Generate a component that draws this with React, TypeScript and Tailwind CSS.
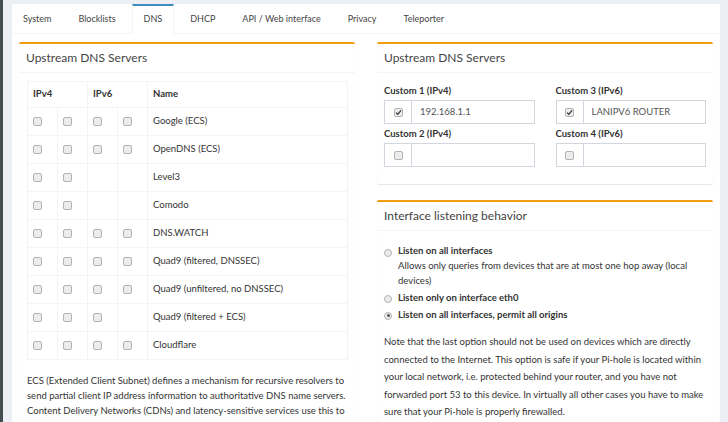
import React from 'react';

const font = { fontFamily: 'Lato, "Noto Sans", sans-serif' };

function Check({ on }: { on?: boolean }) {
  return (
    <span className="inline-flex w-[9px] h-[9px] items-center justify-center rounded-[2px] border border-[#b3b3b3] bg-[#ececec]">
      {on && (
        <svg viewBox="0 0 10 10" className="w-[7px] h-[7px]">
          <path d="M1.5 5.2 L4 7.6 L8.6 2" fill="none" stroke="#333" strokeWidth="1.8" />
        </svg>
      )}
    </span>
  );
}

function Radio({ on }: { on?: boolean }) {
  return (
    <span className="inline-flex w-[8px] h-[8px] shrink-0 items-center justify-center rounded-full border border-[#b3b3b3] bg-[#ececec]">
      {on && <span className="w-[3px] h-[3px] rounded-full bg-[#555]" />}
    </span>
  );
}

function Box({ title, children }: { title: string; children: React.ReactNode }) {
  return (
    <div className="bg-white border-t-2 border-[#f39c12] rounded-[2px] shadow-[0_1px_1px_rgba(0,0,0,0.1)]">
      <div className="h-[29px] flex items-center px-[7px] border-b border-[#f4f4f4] text-[12px] text-[#444]">{title}</div>
      {children}
    </div>
  );
}

const servers: { name: string; v4: number; v6: number }[] = [
  { name: 'Google (ECS)', v4: 2, v6: 2 },
  { name: 'OpenDNS (ECS)', v4: 2, v6: 2 },
  { name: 'Level3', v4: 2, v6: 0 },
  { name: 'Comodo', v4: 2, v6: 0 },
  { name: 'DNS.WATCH', v4: 2, v6: 2 },
  { name: 'Quad9 (filtered, DNSSEC)', v4: 2, v6: 2 },
  { name: 'Quad9 (unfiltered, no DNSSEC)', v4: 2, v6: 2 },
  { name: 'Quad9 (filtered + ECS)', v4: 2, v6: 1 },
  { name: 'Cloudflare', v4: 2, v6: 2 },
];

const tabs = ['System', 'Blocklists', 'DNS', 'DHCP', 'API / Web interface', 'Privacy', 'Teleporter'];

function CustomField({ label, value, on }: { label: string; value?: string; on?: boolean }) {
  return (
    <div>
      <div className="h-[16px] flex items-center font-bold text-[9.5px] text-[#333]">{label}</div>
      <div className="flex h-[24px] border border-[#d2d6de] mt-[1px]">
        <div className="w-[27px] flex items-center justify-center border-r border-[#d2d6de]">
          <Check on={on} />
        </div>
        <div className="flex items-center pl-[8px] text-[9.5px] text-[#555]">{value}</div>
      </div>
    </div>
  );
}

export default function App() {
  return (
    <div className="flex h-[422px] overflow-hidden bg-[#ecf0f5] text-[#333]" style={font}>
      <div className="w-[3px] shrink-0 bg-[#434d52]" />
      <div className="ml-[9px] mt-[4px] w-[708px] shrink-0 bg-white rounded-[2px]">
        {/* tabs */}
        <div className="flex h-[30px] border-b border-[#f4f4f4] gap-[5px]">
          {tabs.map((t) => (
            <div
              key={t}
              className={`flex items-center px-[11px] text-[9px] text-[#444] ${
                t === 'DNS' ? 'border-t-2 border-[#3c8dbc] border-x border-x-[#f4f4f4] -mb-px bg-white pb-[2px]' : ''
              }`}
            >
              {t}
            </div>
          ))}
        </div>

        <div className="flex gap-[22px] px-[7px] pt-[8px]">
          {/* left */}
          <div className="w-[336px] shrink-0">
            <Box title="Upstream DNS Servers">
              <div className="pt-[8px] pl-[8px] pr-[7px]">
                <table className="w-full border-collapse border border-[#f4f4f4] text-[9.5px] text-[#333]">
                  <thead>
                    <tr className="h-[26px]">
                      <th colSpan={2} className="border border-[#f4f4f4] text-left pl-[5px] font-bold">IPv4</th>
                      <th colSpan={2} className="border border-[#f4f4f4] text-left pl-[5px] font-bold">IPv6</th>
                      <th className="border border-[#f4f4f4] text-left pl-[5px] font-bold">Name</th>
                    </tr>
                  </thead>
                  <tbody>
                    {servers.map((s) => (
                      <tr key={s.name} className="h-[28px]">
                        {[0, 1, 2, 3].map((i) => (
                          <td key={i} className="w-[30px] border border-[#f4f4f4] pl-[5px] align-middle">
                            {(i < 2 ? i < s.v4 : i - 2 < s.v6) && (
                              <span className="flex">
                                <Check />
                              </span>
                            )}
                          </td>
                        ))}
                        <td className="border border-[#f4f4f4] pl-[5px]">{s.name}</td>
                      </tr>
                    ))}
                  </tbody>
                </table>
                <p className="mt-[13px] text-[9.5px] leading-[15px] text-[#333] pr-[1px]">
                  ECS (Extended Client Subnet) defines a mechanism for recursive resolvers to send partial client IP
                  address information to authoritative DNS name servers. Content Delivery Networks (CDNs) and
                  latency-sensitive services use this to give geo-located responses when responding to name lookups
                  coming through public DNS resolvers.
                </p>
              </div>
            </Box>
          </div>

          {/* right */}
          <div className="w-[336px] shrink-0 flex flex-col gap-[16px]">
            <Box title="Upstream DNS Servers">
              <div className="grid grid-cols-2 gap-x-[21px] gap-y-[2px] px-[7px] pt-[10px] pb-[17px]">
                <CustomField label="Custom 1 (IPv4)" value="192.168.1.1" on />
                <CustomField label="Custom 3 (IPv6)" value="LANIPV6 ROUTER" on />
                <CustomField label="Custom 2 (IPv4)" />
                <CustomField label="Custom 4 (IPv6)" />
              </div>
            </Box>
            <Box title="Interface listening behavior">
              <div className="px-[7px] pt-[13px] pb-[1px] text-[9.5px] text-[#333]">
                <div className="flex gap-[6px]">
                  <span className="pt-[3px]">
                    <Radio />
                  </span>
                  <div>
                    <div className="font-bold leading-[14px]">Listen on all interfaces</div>
                    <div className="leading-[15px]">
                      Allows only queries from devices that are at most one hop away (local devices)
                    </div>
                  </div>
                </div>
                <div className="flex gap-[6px] items-center mt-[2px] h-[17px]">
                  <Radio />
                  <span className="font-bold">Listen only on interface eth0</span>
                </div>
                <div className="flex gap-[6px] items-center h-[17px]">
                  <Radio on />
                  <span className="font-bold">Listen on all interfaces, permit all origins</span>
                </div>
                <p className="mt-[9px] leading-[17.5px]">
                  Note that the last option should not be used on devices which are directly connected to the
                  Internet. This option is safe if your Pi-hole is located within your local network, i.e. protected
                  behind your router, and you have not forwarded port 53 to this device. In virtually all other cases
                  you have to make sure that your Pi-hole is properly firewalled.
                </p>
              </div>
            </Box>
          </div>
        </div>
      </div>
    </div>
  );
}
